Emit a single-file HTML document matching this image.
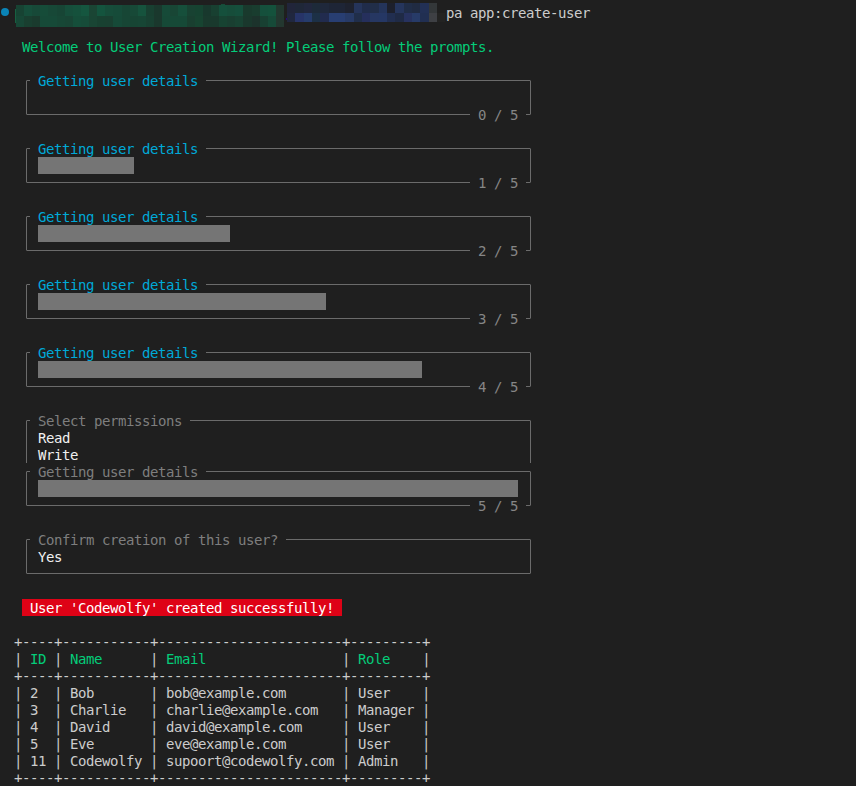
<!DOCTYPE html>
<html><head><meta charset="utf-8"><title>terminal</title>
<style>
html,body{margin:0;padding:0;background:#1f1f1f;}
body{width:856px;height:786px;position:relative;overflow:hidden;font-family:"DejaVu Sans Mono","Liberation Mono",monospace;font-size:14px;}
.t{position:absolute;white-space:pre;height:17px;line-height:17px;letter-spacing:-0.4287px;font-kerning:none;font-variant-ligatures:none;}
.r{position:absolute;}
</style></head><body>
<div class="t" style="top:5px;left:446px;color:#cccccc;">pa app:create-user</div>
<div class="t" style="top:39px;left:22px;color:#04cc79;">Welcome to User Creation Wizard! Please follow the prompts.</div>
<div class="r" style="left:26px;top:80px;width:4px;height:1px;background:#6b6b6b"></div>
<div class="t" style="top:73px;left:38px;color:#00a9d8;">Getting user details</div>
<div class="r" style="left:206px;top:80px;width:325px;height:1px;background:#6b6b6b"></div>
<div class="r" style="left:26px;top:80px;width:1px;height:35px;background:#6b6b6b"></div>
<div class="r" style="left:530px;top:80px;width:1px;height:35px;background:#6b6b6b"></div>
<div class="t" style="top:107px;left:478px;color:#868686;">0 / 5</div>
<div class="r" style="left:26px;top:114px;width:444px;height:1px;background:#6b6b6b"></div>
<div class="r" style="left:526px;top:114px;width:5px;height:1px;background:#6b6b6b"></div>
<div class="r" style="left:26px;top:80px;width:1px;height:1px;background:#474747"></div>
<div class="r" style="left:530px;top:80px;width:1px;height:1px;background:#474747"></div>
<div class="r" style="left:26px;top:114px;width:1px;height:1px;background:#474747"></div>
<div class="r" style="left:530px;top:114px;width:1px;height:1px;background:#474747"></div>
<div class="r" style="left:26px;top:148px;width:4px;height:1px;background:#6b6b6b"></div>
<div class="t" style="top:141px;left:38px;color:#00a9d8;">Getting user details</div>
<div class="r" style="left:206px;top:148px;width:325px;height:1px;background:#6b6b6b"></div>
<div class="r" style="left:26px;top:148px;width:1px;height:35px;background:#6b6b6b"></div>
<div class="r" style="left:530px;top:148px;width:1px;height:35px;background:#6b6b6b"></div>
<div class="t" style="top:175px;left:478px;color:#868686;">1 / 5</div>
<div class="r" style="left:26px;top:182px;width:444px;height:1px;background:#6b6b6b"></div>
<div class="r" style="left:526px;top:182px;width:5px;height:1px;background:#6b6b6b"></div>
<div class="r" style="left:26px;top:148px;width:1px;height:1px;background:#474747"></div>
<div class="r" style="left:530px;top:148px;width:1px;height:1px;background:#474747"></div>
<div class="r" style="left:26px;top:182px;width:1px;height:1px;background:#474747"></div>
<div class="r" style="left:530px;top:182px;width:1px;height:1px;background:#474747"></div>
<div class="r" style="left:38px;top:157px;width:96px;height:17px;background:#757575"></div>
<div class="r" style="left:26px;top:216px;width:4px;height:1px;background:#6b6b6b"></div>
<div class="t" style="top:209px;left:38px;color:#00a9d8;">Getting user details</div>
<div class="r" style="left:206px;top:216px;width:325px;height:1px;background:#6b6b6b"></div>
<div class="r" style="left:26px;top:216px;width:1px;height:35px;background:#6b6b6b"></div>
<div class="r" style="left:530px;top:216px;width:1px;height:35px;background:#6b6b6b"></div>
<div class="t" style="top:243px;left:478px;color:#868686;">2 / 5</div>
<div class="r" style="left:26px;top:250px;width:444px;height:1px;background:#6b6b6b"></div>
<div class="r" style="left:526px;top:250px;width:5px;height:1px;background:#6b6b6b"></div>
<div class="r" style="left:26px;top:216px;width:1px;height:1px;background:#474747"></div>
<div class="r" style="left:530px;top:216px;width:1px;height:1px;background:#474747"></div>
<div class="r" style="left:26px;top:250px;width:1px;height:1px;background:#474747"></div>
<div class="r" style="left:530px;top:250px;width:1px;height:1px;background:#474747"></div>
<div class="r" style="left:38px;top:225px;width:192px;height:17px;background:#757575"></div>
<div class="r" style="left:26px;top:284px;width:4px;height:1px;background:#6b6b6b"></div>
<div class="t" style="top:277px;left:38px;color:#00a9d8;">Getting user details</div>
<div class="r" style="left:206px;top:284px;width:325px;height:1px;background:#6b6b6b"></div>
<div class="r" style="left:26px;top:284px;width:1px;height:35px;background:#6b6b6b"></div>
<div class="r" style="left:530px;top:284px;width:1px;height:35px;background:#6b6b6b"></div>
<div class="t" style="top:311px;left:478px;color:#868686;">3 / 5</div>
<div class="r" style="left:26px;top:318px;width:444px;height:1px;background:#6b6b6b"></div>
<div class="r" style="left:526px;top:318px;width:5px;height:1px;background:#6b6b6b"></div>
<div class="r" style="left:26px;top:284px;width:1px;height:1px;background:#474747"></div>
<div class="r" style="left:530px;top:284px;width:1px;height:1px;background:#474747"></div>
<div class="r" style="left:26px;top:318px;width:1px;height:1px;background:#474747"></div>
<div class="r" style="left:530px;top:318px;width:1px;height:1px;background:#474747"></div>
<div class="r" style="left:38px;top:293px;width:288px;height:17px;background:#757575"></div>
<div class="r" style="left:26px;top:352px;width:4px;height:1px;background:#6b6b6b"></div>
<div class="t" style="top:345px;left:38px;color:#00a9d8;">Getting user details</div>
<div class="r" style="left:206px;top:352px;width:325px;height:1px;background:#6b6b6b"></div>
<div class="r" style="left:26px;top:352px;width:1px;height:35px;background:#6b6b6b"></div>
<div class="r" style="left:530px;top:352px;width:1px;height:35px;background:#6b6b6b"></div>
<div class="t" style="top:379px;left:478px;color:#868686;">4 / 5</div>
<div class="r" style="left:26px;top:386px;width:444px;height:1px;background:#6b6b6b"></div>
<div class="r" style="left:526px;top:386px;width:5px;height:1px;background:#6b6b6b"></div>
<div class="r" style="left:26px;top:352px;width:1px;height:1px;background:#474747"></div>
<div class="r" style="left:530px;top:352px;width:1px;height:1px;background:#474747"></div>
<div class="r" style="left:26px;top:386px;width:1px;height:1px;background:#474747"></div>
<div class="r" style="left:530px;top:386px;width:1px;height:1px;background:#474747"></div>
<div class="r" style="left:38px;top:361px;width:384px;height:17px;background:#757575"></div>
<div class="r" style="left:26px;top:420px;width:4px;height:1px;background:#6b6b6b"></div>
<div class="t" style="top:413px;left:38px;color:#7e7e7e;">Select permissions</div>
<div class="r" style="left:190px;top:420px;width:341px;height:1px;background:#6b6b6b"></div>
<div class="r" style="left:26px;top:420px;width:1px;height:43px;background:#6b6b6b"></div>
<div class="r" style="left:530px;top:420px;width:1px;height:43px;background:#6b6b6b"></div>
<div class="r" style="left:26px;top:420px;width:1px;height:1px;background:#474747"></div>
<div class="r" style="left:530px;top:420px;width:1px;height:1px;background:#474747"></div>
<div class="t" style="top:430px;left:38px;color:#f0f0f0;">Read</div>
<div class="t" style="top:447px;left:38px;color:#f0f0f0;">Write</div>
<div class="r" style="left:26px;top:471px;width:4px;height:1px;background:#6b6b6b"></div>
<div class="t" style="top:464px;left:38px;color:#7e7e7e;">Getting user details</div>
<div class="r" style="left:206px;top:471px;width:325px;height:1px;background:#6b6b6b"></div>
<div class="r" style="left:26px;top:471px;width:1px;height:35px;background:#6b6b6b"></div>
<div class="r" style="left:530px;top:471px;width:1px;height:35px;background:#6b6b6b"></div>
<div class="t" style="top:498px;left:478px;color:#868686;">5 / 5</div>
<div class="r" style="left:26px;top:505px;width:444px;height:1px;background:#6b6b6b"></div>
<div class="r" style="left:526px;top:505px;width:5px;height:1px;background:#6b6b6b"></div>
<div class="r" style="left:26px;top:471px;width:1px;height:1px;background:#474747"></div>
<div class="r" style="left:530px;top:471px;width:1px;height:1px;background:#474747"></div>
<div class="r" style="left:26px;top:505px;width:1px;height:1px;background:#474747"></div>
<div class="r" style="left:530px;top:505px;width:1px;height:1px;background:#474747"></div>
<div class="r" style="left:38px;top:480px;width:480px;height:17px;background:#757575"></div>
<div class="r" style="left:26px;top:539px;width:4px;height:1px;background:#6b6b6b"></div>
<div class="t" style="top:532px;left:38px;color:#7e7e7e;">Confirm creation of this user?</div>
<div class="r" style="left:286px;top:539px;width:245px;height:1px;background:#6b6b6b"></div>
<div class="r" style="left:26px;top:539px;width:1px;height:35px;background:#6b6b6b"></div>
<div class="r" style="left:530px;top:539px;width:1px;height:35px;background:#6b6b6b"></div>
<div class="r" style="left:26px;top:573px;width:505px;height:1px;background:#6b6b6b"></div>
<div class="r" style="left:26px;top:539px;width:1px;height:1px;background:#474747"></div>
<div class="r" style="left:530px;top:539px;width:1px;height:1px;background:#474747"></div>
<div class="r" style="left:26px;top:573px;width:1px;height:1px;background:#474747"></div>
<div class="r" style="left:530px;top:573px;width:1px;height:1px;background:#474747"></div>
<div class="t" style="top:549px;left:38px;color:#f0f0f0;">Yes</div>
<div class="r" style="left:22px;top:599px;width:320px;height:17px;background:#de0216"></div>
<div class="t" style="top:600px;left:30px;color:#ffffff;">User 'Codewolfy' created successfully!</div>
<div class="t" style="top:634px;left:14px;color:#cccccc;">+----+-----------+-----------------------+---------+</div>
<div class="t" style="top:651px;left:14px;color:#cccccc;">| <span style="color:#04cc79">ID</span> | <span style="color:#04cc79">Name</span>      | <span style="color:#04cc79">Email</span>                 | <span style="color:#04cc79">Role</span>    |</div>
<div class="t" style="top:668px;left:14px;color:#cccccc;">+----+-----------+-----------------------+---------+</div>
<div class="t" style="top:685px;left:14px;color:#cccccc;">| 2  | Bob       | bob@example.com       | User    |</div>
<div class="t" style="top:702px;left:14px;color:#cccccc;">| 3  | Charlie   | charlie@example.com   | Manager |</div>
<div class="t" style="top:719px;left:14px;color:#cccccc;">| 4  | David     | david@example.com     | User    |</div>
<div class="t" style="top:736px;left:14px;color:#cccccc;">| 5  | Eve       | eve@example.com       | User    |</div>
<div class="t" style="top:753px;left:14px;color:#cccccc;">| 11 | Codewolfy | supoort@codewolfy.com | Admin   |</div>
<div class="t" style="top:770px;left:14px;color:#cccccc;">+----+-----------+-----------------------+---------+</div>
<div class="r" style="left:1px;top:8px;width:8px;height:8px;border-radius:50%;background:#0a84b7"></div>
<svg class="r" style="left:0;top:0" width="460" height="30" shape-rendering="crispEdges"><rect x="16.00" y="5" width="8.17" height="11" fill="#174333"/><rect x="24.12" y="5" width="8.17" height="11" fill="#164e3b"/><rect x="32.24" y="5" width="8.17" height="11" fill="#174938"/><rect x="40.36" y="5" width="8.17" height="11" fill="#164c39"/><rect x="48.48" y="5" width="8.17" height="11" fill="#174837"/><rect x="56.61" y="5" width="8.17" height="11" fill="#174535"/><rect x="64.73" y="5" width="8.17" height="11" fill="#164e3b"/><rect x="72.85" y="5" width="8.17" height="11" fill="#15513c"/><rect x="80.97" y="5" width="8.17" height="11" fill="#15563f"/><rect x="89.09" y="5" width="8.17" height="11" fill="#1a4534"/><rect x="97.21" y="5" width="8.17" height="11" fill="#14543e"/><rect x="105.33" y="5" width="8.17" height="11" fill="#164d3a"/><rect x="113.45" y="5" width="8.17" height="11" fill="#164b39"/><rect x="121.58" y="5" width="8.17" height="11" fill="#174635"/><rect x="129.70" y="5" width="8.17" height="11" fill="#174937"/><rect x="137.82" y="5" width="8.17" height="11" fill="#16533d"/><rect x="145.94" y="5" width="8.17" height="11" fill="#184031"/><rect x="154.06" y="5" width="8.17" height="11" fill="#1a382d"/><rect x="162.18" y="5" width="8.17" height="11" fill="#164a38"/><rect x="170.30" y="5" width="8.17" height="11" fill="#184635"/><rect x="178.42" y="5" width="8.17" height="11" fill="#164f3b"/><rect x="186.55" y="5" width="8.17" height="11" fill="#184232"/><rect x="194.67" y="5" width="8.17" height="11" fill="#164331"/><rect x="202.79" y="5" width="8.17" height="11" fill="#18382d"/><rect x="210.91" y="5" width="8.17" height="11" fill="#184031"/><rect x="219.03" y="5" width="8.17" height="11" fill="#15503c"/><rect x="227.15" y="5" width="8.17" height="11" fill="#164d3a"/><rect x="235.27" y="5" width="8.17" height="11" fill="#154f3c"/><rect x="243.39" y="5" width="8.17" height="11" fill="#193a2d"/><rect x="251.52" y="5" width="8.17" height="11" fill="#193d2f"/><rect x="259.64" y="5" width="8.17" height="11" fill="#15503c"/><rect x="267.76" y="5" width="8.17" height="11" fill="#14523c"/><rect x="275.88" y="5" width="8.17" height="11" fill="#22382f"/><rect x="16.00" y="16" width="8.17" height="11" fill="#174736"/><rect x="24.12" y="16" width="8.17" height="11" fill="#193f30"/><rect x="32.24" y="16" width="8.17" height="11" fill="#1a3b2e"/><rect x="40.36" y="16" width="8.17" height="11" fill="#164a38"/><rect x="48.48" y="16" width="8.17" height="11" fill="#164a38"/><rect x="56.61" y="16" width="8.17" height="11" fill="#174736"/><rect x="64.73" y="16" width="8.17" height="11" fill="#184535"/><rect x="72.85" y="16" width="8.17" height="11" fill="#154e3a"/><rect x="80.97" y="16" width="8.17" height="11" fill="#164c39"/><rect x="89.09" y="16" width="8.17" height="11" fill="#194534"/><rect x="97.21" y="16" width="8.17" height="11" fill="#184131"/><rect x="105.33" y="16" width="8.17" height="11" fill="#194031"/><rect x="113.45" y="16" width="8.17" height="11" fill="#164a38"/><rect x="121.58" y="16" width="8.17" height="11" fill="#174635"/><rect x="129.70" y="16" width="8.17" height="11" fill="#174534"/><rect x="137.82" y="16" width="8.17" height="11" fill="#174635"/><rect x="145.94" y="16" width="8.17" height="11" fill="#184132"/><rect x="154.06" y="16" width="8.17" height="11" fill="#1a382d"/><rect x="162.18" y="16" width="8.17" height="11" fill="#164937"/><rect x="170.30" y="16" width="8.17" height="11" fill="#164937"/><rect x="178.42" y="16" width="8.17" height="11" fill="#164937"/><rect x="186.55" y="16" width="8.17" height="11" fill="#193f30"/><rect x="194.67" y="16" width="8.17" height="11" fill="#174431"/><rect x="202.79" y="16" width="8.17" height="11" fill="#19392d"/><rect x="210.91" y="16" width="8.17" height="11" fill="#19392d"/><rect x="219.03" y="16" width="8.17" height="11" fill="#174332"/><rect x="227.15" y="16" width="8.17" height="11" fill="#193f31"/><rect x="235.27" y="16" width="8.17" height="11" fill="#184333"/><rect x="243.39" y="16" width="8.17" height="11" fill="#1a382d"/><rect x="251.52" y="16" width="8.17" height="11" fill="#1c332c"/><rect x="259.64" y="16" width="8.17" height="11" fill="#184032"/><rect x="267.76" y="16" width="8.17" height="11" fill="#164a38"/><rect x="275.88" y="16" width="8.17" height="11" fill="#23372f"/><rect x="15" y="9" width="1" height="14" fill="#176041"/><rect x="221" y="4" width="4" height="1" fill="#174a36"/><rect x="286" y="18" width="1" height="2" fill="#2a0a78"/><rect x="287.00" y="3" width="8.38" height="10" fill="#21253a"/><rect x="295.33" y="3" width="8.38" height="10" fill="#1f2738"/><rect x="303.67" y="3" width="8.38" height="10" fill="#21273d"/><rect x="312.00" y="3" width="8.38" height="10" fill="#1d2a39"/><rect x="320.33" y="3" width="8.38" height="10" fill="#1f283b"/><rect x="328.67" y="3" width="8.38" height="10" fill="#1e2536"/><rect x="337.00" y="3" width="8.38" height="10" fill="#1e2536"/><rect x="345.33" y="3" width="8.38" height="10" fill="#1e222f"/><rect x="353.67" y="3" width="8.38" height="10" fill="#25345a"/><rect x="362.00" y="3" width="8.38" height="10" fill="#202c4a"/><rect x="370.33" y="3" width="8.38" height="10" fill="#212e48"/><rect x="378.67" y="3" width="8.38" height="10" fill="#24345a"/><rect x="387.00" y="3" width="8.38" height="10" fill="#1d202c"/><rect x="395.33" y="3" width="8.38" height="10" fill="#25355c"/><rect x="403.67" y="3" width="8.38" height="10" fill="#202d47"/><rect x="412.00" y="3" width="8.38" height="10" fill="#202b42"/><rect x="420.33" y="3" width="8.38" height="10" fill="#223055"/><rect x="428.67" y="3" width="8.38" height="10" fill="#333739"/><rect x="287.00" y="13" width="8.38" height="9" fill="#20273f"/><rect x="295.33" y="13" width="8.38" height="9" fill="#273468"/><rect x="303.67" y="13" width="8.38" height="9" fill="#263c6c"/><rect x="312.00" y="13" width="8.38" height="9" fill="#1c3046"/><rect x="320.33" y="13" width="8.38" height="9" fill="#212b4e"/><rect x="328.67" y="13" width="8.38" height="9" fill="#283e72"/><rect x="337.00" y="13" width="8.38" height="9" fill="#283e72"/><rect x="345.33" y="13" width="8.38" height="9" fill="#273a66"/><rect x="353.67" y="13" width="8.38" height="9" fill="#202e4a"/><rect x="362.00" y="13" width="8.38" height="9" fill="#252f5c"/><rect x="370.33" y="13" width="8.38" height="9" fill="#263762"/><rect x="378.67" y="13" width="8.38" height="9" fill="#253764"/><rect x="387.00" y="13" width="8.38" height="9" fill="#212e50"/><rect x="395.33" y="13" width="8.38" height="9" fill="#1f2a45"/><rect x="403.67" y="13" width="8.38" height="9" fill="#27325f"/><rect x="412.00" y="13" width="8.38" height="9" fill="#273b68"/><rect x="420.33" y="13" width="8.38" height="9" fill="#212f52"/><rect x="428.67" y="13" width="8.38" height="9" fill="#3e4044"/><rect x="437.00" y="13" width="8.38" height="9" fill="#232322"/></svg>
</body></html>
